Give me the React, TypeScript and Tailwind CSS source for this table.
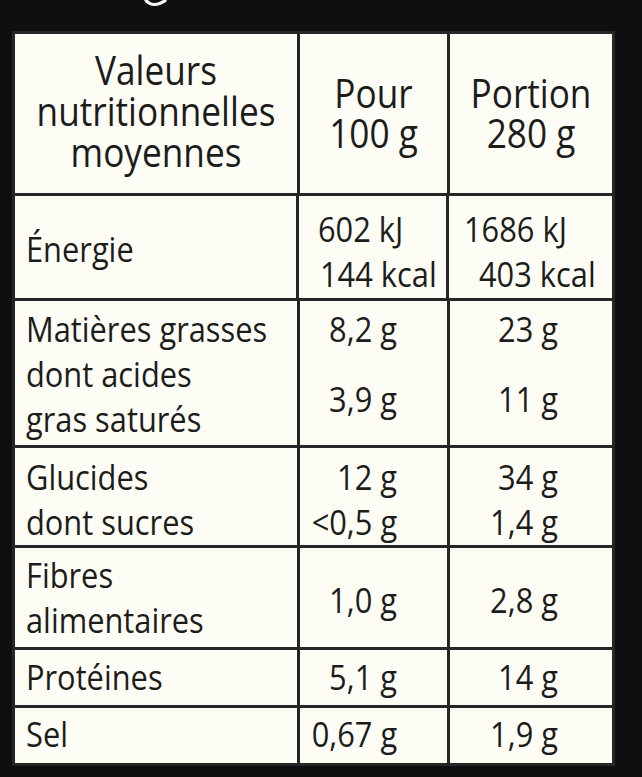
import React from 'react';

// Open Sans is only installed at normal width, so narrow it the way the label's condensed face looks
function Sq({ children, origin = 'origin-left', className = '' }: { children: React.ReactNode; origin?: string; className?: string }) {
  return <div className={`whitespace-nowrap scale-x-[0.88] ${origin} ${className}`}>{children}</div>;
}

function ValueCell({ lines, pt, pr, last = false }: { lines: string[]; pt: string; pr: string; last?: boolean }) {
  return (
    <div className={`${last ? 'flex-1' : 'w-[150px]'} border-l-[3px] border-[#262626] ${pt} ${pr} text-right`}>
      {lines.map((l) => (
        <Sq key={l} origin="origin-right">
          {l}
        </Sq>
      ))}
    </div>
  );
}

function Label({ lines, pt }: { lines: string[]; pt: string }) {
  return (
    <div className={`w-[282px] pl-[11px] ${pt}`}>
      {lines.map((l) => (
        <Sq key={l}>{l}</Sq>
      ))}
    </div>
  );
}

export default function App() {
  return (
    <div className="min-h-[777px] w-[642px] bg-[#0e0f11] font-['Open_Sans',sans-serif] text-[35px] leading-[45px] text-[#1c1c1a]">
      {/* bit of text cut off above the table */}
      <div className="h-[31px] pl-[142px]">
        <svg width="28" height="9" viewBox="0 0 28 9">
          <path d="M2 0 C5 6 14 9 24 2 L25 0 L21 0 C15 4 9 4 6 0 Z" fill="#f4f4f0" />
        </svg>
      </div>

      <div className="ml-[12px] w-[603px] border-[3px] border-[#262626] bg-[#fdfdf6]">
        {/* Header */}
        <div className="flex h-[159px]">
          <div className="w-[282px] pt-[15px] text-center text-[40px] leading-[41px]">
            <Sq origin="origin-center">Valeurs</Sq>
            <Sq origin="origin-center">nutritionnelles</Sq>
            <Sq origin="origin-center">moyennes</Sq>
          </div>
          <div className="w-[150px] border-l-[3px] border-[#262626] pt-[39px] text-center text-[40px] leading-[40px]">
            <Sq origin="origin-center">Pour</Sq>
            <Sq origin="origin-center">100 g</Sq>
          </div>
          <div className="flex-1 border-l-[3px] border-[#262626] pt-[39px] text-center text-[40px] leading-[40px]">
            <Sq origin="origin-center">Portion</Sq>
            <Sq origin="origin-center">280 g</Sq>
          </div>
        </div>

        {/* Énergie */}
        <div className="flex h-[105px] border-t-[3px] border-[#262626]">
          <Label lines={['Énergie']} pt="pt-[30px]" />
          <div className="w-[150px] border-l-[3px] border-[#262626] pt-[10px]">
            <div className="pl-[19px]">
              <Sq>602 kJ</Sq>
            </div>
            <div className="pl-[21px]">
              <Sq>144 kcal</Sq>
            </div>
          </div>
          <div className="flex-1 border-l-[3px] border-[#262626] pt-[10px]">
            <div className="pl-[15px]">
              <Sq>1686 kJ</Sq>
            </div>
            <div className="pl-[30px]">
              <Sq>403 kcal</Sq>
            </div>
          </div>
        </div>

        {/* Matières grasses */}
        <div className="flex h-[147px] border-t-[3px] border-[#262626]">
          <Label lines={['Matières grasses', 'dont acides', 'gras saturés']} pt="pt-[5px]" />
          <div className="w-[150px] border-l-[3px] border-[#262626] pr-[50px] pt-[5px] text-right">
            <Sq origin="origin-right">8,2 g</Sq>
            <Sq origin="origin-right" className="pt-[25px]">
              3,9 g
            </Sq>
          </div>
          <div className="flex-1 border-l-[3px] border-[#262626] pr-[54px] pt-[5px] text-right">
            <Sq origin="origin-right">23 g</Sq>
            <Sq origin="origin-right" className="pt-[25px]">
              11 g
            </Sq>
          </div>
        </div>

        {/* Glucides */}
        <div className="flex h-[100px] border-t-[3px] border-[#262626]">
          <Label lines={['Glucides', 'dont sucres']} pt="pt-[6px]" />
          <ValueCell lines={['12 g', '<0,5 g']} pt="pt-[6px]" pr="pr-[50px]" />
          <ValueCell lines={['34 g', '1,4 g']} pt="pt-[6px]" pr="pr-[54px]" last />
        </div>

        {/* Fibres */}
        <div className="flex h-[102px] border-t-[3px] border-[#262626]">
          <Label lines={['Fibres', 'alimentaires']} pt="pt-[4px]" />
          <ValueCell lines={['1,0 g']} pt="pt-[29px]" pr="pr-[50px]" />
          <ValueCell lines={['2,8 g']} pt="pt-[29px]" pr="pr-[54px]" last />
        </div>

        {/* Protéines */}
        <div className="flex h-[58px] border-t-[3px] border-[#262626]">
          <Label lines={['Protéines']} pt="pt-[4px]" />
          <ValueCell lines={['5,1 g']} pt="pt-[4px]" pr="pr-[50px]" />
          <ValueCell lines={['14 g']} pt="pt-[4px]" pr="pr-[54px]" last />
        </div>

        {/* Sel */}
        <div className="flex h-[58px] border-t-[3px] border-[#262626]">
          <Label lines={['Sel']} pt="pt-[3px]" />
          <ValueCell lines={['0,67 g']} pt="pt-[3px]" pr="pr-[50px]" />
          <ValueCell lines={['1,9 g']} pt="pt-[3px]" pr="pr-[54px]" last />
        </div>
      </div>
    </div>
  );
}
